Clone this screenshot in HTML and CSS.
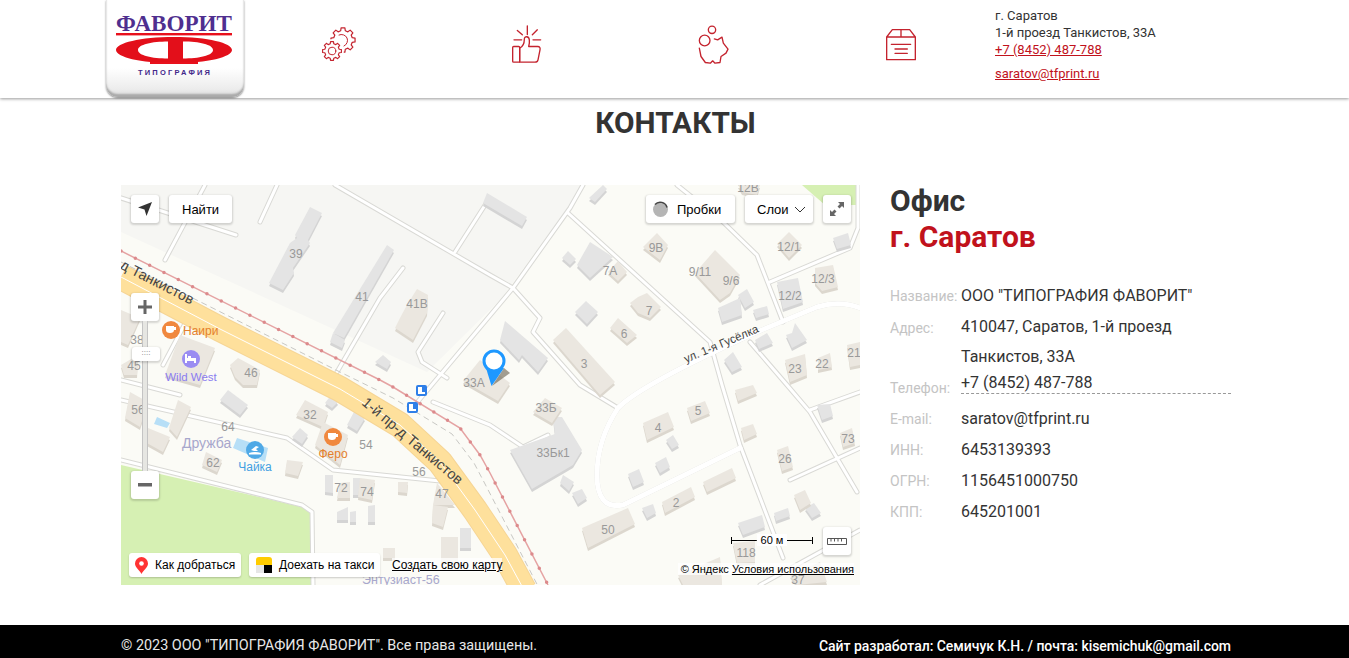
FILE: index.html
```html
<!DOCTYPE html>
<html>
<head>
    <meta charset="utf-8">
    <title>Контакты</title>
    <link rel="stylesheet" href="styles.css">
</head>
<body>
    <header class="site-header">
        <div class="header-inner">
            <a class="logo">
                <svg viewBox="106 0 138 97" width="138" height="97">
                    <text class="logo-name" x="116" y="31" textLength="116" lengthAdjust="spacingAndGlyphs">ФАВОРИТ</text>
                    <rect x="116" y="33" width="116" height="2.4" fill="#e8101c"/>
                    <path fill="#e30f1a" fill-rule="evenodd" d="M116 50c0-7 24-13 58-13s58 6 58 13-24 13-58 13-58-6-58-13zM168 41.500c-16 0-30 3-30 8.500s14 8.500 30 8.500zM183 41.500v17c16 0 30-3 30-8.500s-14-8.500-30-8.500z"/>
                    <rect x="150" y="62" width="48" height="2" fill="#e8101c"/>
                    <text class="logo-sub" x="174" y="75" textLength="72">ТИПОГРАФИЯ</text>
                </svg>
            </a>
            <nav class="header-icons">
                <div class="header-icon">
                    <svg class="ico" width="38" height="38" viewBox="320 25 38 38">
                        <defs>
                            <polygon id="gear" points="7.57,-1.89 9.88,-1.56 9.88,1.56 7.57,1.89 6.69,4.02 8.09,5.88 5.88,8.09 4.02,6.69 1.89,7.57 1.56,9.88 -1.56,9.88 -1.89,7.57 -4.02,6.69 -5.88,8.09 -8.09,5.88 -6.69,4.02 -7.57,1.89 -9.88,1.56 -9.88,-1.56 -7.57,-1.89 -6.69,-4.02 -8.09,-5.88 -5.88,-8.09 -4.02,-6.69 -1.89,-7.57 -1.56,-9.88 1.56,-9.88 1.89,-7.57 4.02,-6.69 5.88,-8.09 8.09,-5.88 6.69,-4.02"/>
                        </defs>
                        <use href="#gear" transform="translate(343 40) scale(1.22)" stroke-width="1"/>
                        <path d="M339 35a6 6 0 1 1 5 11"/>
                        <use href="#gear" class="gear-mask" transform="translate(332 51) scale(.95)"/>
                        <use href="#gear" transform="translate(332 51) scale(.95)" stroke-width="1.200"/>
                        <circle cx="332" cy="51" r="3.800"/>
                    </svg>
                </div>
                <div class="header-icon">
                    <svg class="ico" width="35" height="42" viewBox="90 40 105 125" stroke-width="4">
                        <rect x="101" y="110" width="21" height="47" rx="3"/>
                        <path d="M122 157V115C132 110 136 100 136 88 136 78 150 78 151 90 152 100 150 105 149 110H176C183 110 184 115 183 120L177 150C176 155 172 157 168 157Z"/>
                        <path d="M145 48V74M115 62 130 75M175 60 160 75M105 90H128M162 90H185"/>
                    </svg>
                </div>
                <div class="header-icon">
                    <svg class="ico" width="35" height="42" viewBox="650 40 105 125" stroke-width="4">
                        <circle cx="676" cy="92" r="16"/>
                        <circle cx="698" cy="60" r="11"/>
                        <path d="M705 87 715 90 728 82 732 100 746 118 740 130 725 140 722 158 707 160 700 153 693 160 678 158 665 140 660 115"/>
                    </svg>
                </div>
                <div class="header-icon">
                    <svg class="ico" width="35" height="35" viewBox="1215 50 105 105" stroke-width="4">
                        <path d="M1223 80H1309V148H1223ZM1223 80 1240 58H1292L1309 80M1266 58V80M1237 102H1295M1248 116H1285M1248 129H1285"/>
                    </svg>
                </div>
            </nav>
            <div class="header-contacts">
                <div>г. Саратов</div>
                <div>1-й проезд Танкистов, 33А</div>
                <a href="#">+7 (8452) 487-788</a>
                <a href="#" class="header-mail">saratov@tfprint.ru</a>
            </div>
        </div>
    </header>

    <main class="content">
        <h1 class="page-title">КОНТАКТЫ</h1>
        <div class="contact-row">
            <div class="map">
                <svg class="map-canvas" viewBox="121 185 739 400" width="739" height="400">
                    <defs>
                        <g id="roads">
                            <path d="M205 185 165 260M188 318 163 365M121 198 236 235M277 185 260 222M403 268 380 298 337 372M443 313 418 352 422 362 447 378"/>
                            <path d="M335 185 490 275 513 288 540 318 533 332 580 385 618 408M583 185 570 208 513 288 415 405M568 213 710 342 722 385 740 445 783 558M487 202 455 252"/>
                            <path stroke-width="5" d="M740 448 623 505Q597 510 597 475 597 440 618 408 640 385 757 332L817 307Q840 300 860 308"/>
                            <path d="M677 185 723 222 757 255 783 322M770 282 850 248 858 228V185M750 342 787 385 810 412 857 492M810 410 860 392M790 480 860 448M760 585 860 530"/>
                            <path d="M121 400 287 438 333 470 440 481M121 460 302 505 312 512 313 585M433 402 490 425 523 447 548 435M121 380 180 395"/>
                        </g>
                        <g id="blocks-grey">
                            <polygon points="603,185 589,198 595,202 607,189"/>
                            <polygon points="487,193 527,217 522,226 483,203"/>
                            <polygon points="590,242 613,257 590,278 577,265"/>
                            <polygon points="568,251 576,259 570,265 562,258"/>
                            <polygon points="586,301 598,312 587,324 575,312"/>
                            <polygon points="505,321 548,358 538,372 522,355 519,360 500,340"/>
                            <polygon points="740,298 742,315 722,322 718,308"/>
                            <polygon points="747,289 754,302 745,308 738,295"/>
                            <polygon points="767,306 769,314 756,318 753,310"/>
                            <polygon points="777,282 798,278 803,302 783,309"/>
                            <polygon points="848,233 851,245 837,249 833,238"/>
                            <polygon points="795,323 807,340 792,348 786,335 792,333"/>
                            <polygon points="767,333 773,343 759,349 755,340"/>
                            <polygon points="733,352 742,367 732,372 724,360"/>
                            <polygon points="510,450 555,434 553,417 562,417 582,450 573,465 532,489"/>
                            <polygon points="563,475 574,482 569,491 560,483"/>
                            <polygon points="572,493 582,489 587,498 578,504"/>
                            <polygon points="628,474 639,469 644,482 633,487"/>
                            <polygon points="655,463 666,457 670,467 660,473"/>
                            <polygon points="666,440 673,435 679,445 672,449"/>
                            <polygon points="642,508 653,504 656,513 647,518"/>
                            <polygon points="738,523 762,515 765,527 743,535"/>
                            <polygon points="774,513 788,508 790,516 776,521"/>
                            <polygon points="805,508 814,503 821,513 812,518"/>
                            <polygon points="817,405 830,404 833,416 822,420"/>
                            <polygon points="220,400 228,390 248,405 240,415"/>
                            <polygon points="325,403 332,394 338,402 332,408"/>
                            <polygon points="292,437 300,428 308,435 302,444"/>
                            <polygon points="347,425 355,410 365,418 357,431"/>
                            <polygon points="325,475 333,475 333,493 325,492"/>
                            <polygon points="353,478 360,478 360,495 353,495"/>
                            <polygon points="337,512 348,507 348,520 337,520"/>
                            <polygon points="350,512 356,511 356,522 350,522"/>
                            <polygon points="368,506 375,505 375,522 368,522"/>
                            <polygon points="460,528 471,528 471,548 460,548"/>
                            <polygon points="310,207 322,213 308,240 310,243 293,268 294,273 283,290 269,283 290,243 297,238 295,235"/>
                            <polygon points="387,245 394,250 344,338 333,333"/>
                            <polygon points="333,333 345,340 342,348 330,342"/>
                            <polygon points="375,362 383,355 391,362 387,369"/>
                        </g>
                        <g id="blocks-beige">
                            <polygon points="417,289 428,295 427,313 413,340 395,328 400,318 407,305"/>
                            <polygon points="480,360 510,383 498,401 463,381"/>
                            <polygon points="545,398 562,408 552,423 533,412"/>
                            <polygon points="566,328 615,382 600,395 553,340"/>
                            <polygon points="618,318 637,335 627,343 610,328"/>
                            <polygon points="630,303 638,297 647,293 661,307 650,318 638,313"/>
                            <polygon points="618,261 627,272 618,281 608,272"/>
                            <polygon points="657,233 668,245 660,260 643,247"/>
                            <polygon points="715,250 740,275 730,293 720,300 695,273"/>
                            <polygon points="789,232 802,245 789,258 777,244"/>
                            <polygon points="738,185 760,185 757,195 742,192"/>
                            <polygon points="815,268 833,265 838,287 822,291 815,283"/>
                            <polygon points="785,360 805,354 807,375 790,382"/>
                            <polygon points="818,358 830,353 832,367 818,370"/>
                            <polygon points="847,345 860,342 860,365 850,367"/>
                            <polygon points="643,423 668,412 674,427 647,440"/>
                            <polygon points="687,408 705,401 710,413 691,421"/>
                            <polygon points="735,390 753,385 757,393 738,401"/>
                            <polygon points="741,428 753,424 757,434 744,440"/>
                            <polygon points="777,450 788,446 793,467 782,471"/>
                            <polygon points="840,433 852,428 855,443 843,447"/>
                            <polygon points="794,495 805,490 811,503 800,510"/>
                            <polygon points="662,502 691,487 695,497 665,513"/>
                            <polygon points="703,482 732,468 736,478 707,492"/>
                            <polygon points="582,528 628,508 635,524 588,548"/>
                            <polygon points="733,543 755,541 755,562 737,563"/>
                            <polygon points="678,575 720,557 722,585 683,585"/>
                            <polygon points="790,575 820,562 827,582 797,585"/>
                            <polygon points="130,392 148,402 140,427 125,418"/>
                            <polygon points="178,400 191,407 177,437 169,428"/>
                            <polygon points="148,428 170,437 163,452 145,442"/>
                            <polygon points="206,452 222,460 217,472 202,465"/>
                            <polygon points="305,400 328,412 323,427 296,415"/>
                            <polygon points="323,422 348,435 340,465 315,445"/>
                            <polygon points="287,460 303,462 298,476 285,473"/>
                            <polygon points="437,483 455,505 433,505"/>
                            <polygon points="433,505 448,507 443,527 432,523"/>
                            <polygon points="398,482 408,482 407,493 398,492"/>
                            <polygon points="340,483 350,482 350,498 337,498"/>
                            <polygon points="360,478 375,480 372,500 358,497"/>
                            <polygon points="383,548 395,548 395,558 383,558"/>
                            <polygon points="441,537 458,537 458,562 441,562"/>
                            <polygon points="180,335 215,348 200,385 165,375"/>
                            <polygon points="230,365 238,358 260,370 257,385 243,385 235,377"/>
                            <polygon points="121,310 140,318 128,345 121,342"/>
                            <polygon points="121,365 138,355 137,375 124,375"/>
                        </g>
                    </defs>

                    <rect class="land" x="121" y="185" width="739" height="400"/>
                    <polygon class="zone" points="121,185 585,185 500,300 427,372 270,300 121,232"/>
                    <polygon class="park" points="802,185 860,185 860,205 825,205"/>
                    <polygon class="park" points="121,465 302,507 312,514 313,585 121,585"/>
                    <polygon class="water" points="237,438 268,448 265,462 233,448"/>
                    <polygon class="water" points="157,417 170,423 167,428 154,424"/>

                    <use href="#roads" class="road-case"/>
                    <use href="#roads" class="road-fill"/>

                    <use href="#blocks-grey" class="block-grey-side" y="3"/>
                    <use href="#blocks-grey" class="block-grey"/>
                    <use href="#blocks-beige" class="block-beige-side" y="3"/>
                    <use href="#blocks-beige" class="block-beige"/>

                    <path class="highway-edge" d="M121 277 220 329 340 389 400 425 440 462 475 510 505 555 524 590"/>
                    <path class="highway" d="M121 277 220 329 340 389 400 425 440 462 475 510 505 555 524 590"/>
                    <path class="highway-line" d="M121 277 220 329 340 389 400 425 440 462 475 510 505 555 524 590"/>
                    <path class="rail-dash" d="M121 262 340 372 393 398 452 434 474 463 484 482 540 590"/>
                    <path class="rail" d="M121 251 380 380 393 387 460 428 480 455 490 473 548 585"/>
                    <path class="rail-dots" d="M121 251 380 380 393 387 460 428 480 455 490 473 548 585"/>

                    <g class="num">
                        <text x="296" y="258">39</text>
                        <text x="362" y="301">41</text>
                        <text x="417" y="308">41В</text>
                        <text x="137" y="344">38</text>
                        <text x="134" y="370">45</text>
                        <text x="251" y="377">46</text>
                        <text x="474" y="387">33А</text>
                        <text x="584" y="368">3</text>
                        <text x="624" y="338">6</text>
                        <text x="649" y="315">7</text>
                        <text x="610" y="275">7А</text>
                        <text x="656" y="252">9В</text>
                        <text x="700" y="276">9/11</text>
                        <text x="731" y="285">9/6</text>
                        <text x="789" y="251">12/1</text>
                        <text x="748" y="192">12В</text>
                        <text x="823" y="283">12/3</text>
                        <text x="790" y="300">12/2</text>
                        <text x="795" y="373">23</text>
                        <text x="822" y="368">22</text>
                        <text x="854" y="357">21</text>
                        <text x="138" y="414">56</text>
                        <text x="228" y="431">64</text>
                        <text x="213" y="467">62</text>
                        <text x="310" y="419">32</text>
                        <text x="366" y="449">54</text>
                        <text x="419" y="476">56</text>
                        <text x="341" y="492">72</text>
                        <text x="367" y="496">74</text>
                        <text x="442" y="498">47</text>
                        <text x="546" y="412">33Б</text>
                        <text x="553" y="457">33Бк1</text>
                        <text x="658" y="432">4</text>
                        <text x="698" y="415">5</text>
                        <text x="785" y="463">26</text>
                        <text x="848" y="443">73</text>
                        <text x="676" y="507">2</text>
                        <text x="608" y="534">50</text>
                        <text x="746" y="557">118</text>
                        <text x="798" y="584">37</text>
                    </g>

                    <text class="road-label" transform="translate(119 268) rotate(27)">д Танкистов</text>
                    <text class="road-label" transform="translate(361 404) rotate(40)">1-й пр-д Танкистов</text>
                    <text class="road-label road-label-small" transform="translate(686 363) rotate(-23)">ул. 1-я Гусёлка</text>
                    <text class="place" x="182" y="448">Дружба</text>
                    <text class="place place-small" x="362" y="584">Энтузиаст-56</text>

                    <circle cx="171" cy="330" r="9" fill="#f0883e"/>
                    <path class="poi-glyph" d="M166 326h8v4q0 3-4 3t-4-3zM174 327h2v3h-2z"/>
                    <text class="poi-orange" x="183" y="335">Наири</text>
                    <circle cx="191" cy="359" r="9" fill="#9a8cf2"/>
                    <path class="poi-glyph" d="M185 354h2v4h9v5h-2v-2h-7v2h-2zM188 356h3v2h-3z"/>
                    <text class="poi-purple" x="191" y="381" text-anchor="middle">Wild West</text>
                    <circle cx="255" cy="450" r="9" fill="#4fa9e6"/>
                    <path class="poi-glyph" d="M249 453q6-2 12 0v1.500h-12zM251 450l5-4 3 1-3 2 2 2h-4z"/>
                    <text class="poi-blue" x="255" y="471" text-anchor="middle">Чайка</text>
                    <circle cx="333" cy="437" r="9" fill="#f0883e"/>
                    <path class="poi-glyph" d="M328 433h8v4q0 3-4 3t-4-3zM336 434h2v3h-2z"/>
                    <text class="poi-orange" x="333" y="458" text-anchor="middle">Феро</text>

                    <rect x="416" y="385" width="11" height="11" rx="2" fill="#2f7fe8"/>
                    <path class="poi-glyph" d="M418 387h4v5h3v2h-7z"/>
                    <rect x="407" y="402" width="11" height="11" rx="2" fill="#2f7fe8"/>
                    <path class="poi-glyph" d="M409 404h4v5h3v2h-7z"/>

                    <path class="pin-shadow" d="M492 386 510 373 504 368z"/>
                    <path class="pin-tail" d="M486 368 491.500 386 504 368z"/>
                    <circle class="pin-ring" cx="494" cy="361" r="10"/>
                </svg>

                <div class="map-bar map-bar-tl">
                    <button class="map-btn map-btn-square">
                        <svg width="16" height="16" viewBox="0 0 16 16"><path fill="#333" d="M15 1 1 6.500 7.500 8.500 9.500 15z"/></svg>
                    </button>
                    <button class="map-btn">Найти</button>
                </div>

                <div class="map-bar map-bar-tr">
                    <button class="map-btn map-btn-traffic">
                        <svg width="17" height="17" viewBox="0 0 17 17"><circle cx="8.500" cy="8.500" r="7.500" fill="#b5b5b5"/><path fill="none" stroke="#444" stroke-width="1.500" d="M3 3.500a7 7 0 0 1 12 3"/></svg>
                        Пробки
                    </button>
                    <button class="map-btn map-btn-layers">
                        Слои
                        <svg width="12" height="7" viewBox="0 0 12 7"><path fill="none" stroke="#333" d="M1 1l5 5 5-5"/></svg>
                    </button>
                    <button class="map-btn map-btn-square">
                        <svg width="16" height="16" viewBox="0 0 16 16"><path fill="#666" d="M9 1h6v6l-2-2-2.500 2.500-2-2L11 3zM7 15H1V9l2 2 2.500-2.500 2 2L5 13z"/></svg>
                    </button>
                </div>

                <div class="zoom-ctl">
                    <button class="map-btn map-btn-square zoom-btn">
                        <svg width="14" height="14" viewBox="0 0 14 14"><path fill="#666" d="M5.500 0h3v5.500H14v3H8.500V14h-3V8.500H0v-3h5.500z"/></svg>
                    </button>
                    <div class="zoom-track">
                        <div class="zoom-handle">::::</div>
                    </div>
                    <button class="map-btn map-btn-square zoom-btn">
                        <svg width="14" height="4" viewBox="0 0 14 4"><rect width="14" height="3.500" fill="#666"/></svg>
                    </button>
                </div>

                <div class="map-bar map-bar-bl">
                    <button class="map-chip">
                        <svg width="13" height="17" viewBox="0 0 13 17"><path fill="#f33" d="M6.500 0a6.500 6.500 0 0 1 6.500 6.500C13 10.500 8.500 13 6.500 17 4.500 13 0 10.500 0 6.500A6.500 6.500 0 0 1 6.500 0z"/><circle cx="6.500" cy="6.500" r="2.300" fill="#fff"/></svg>
                        Как добраться
                    </button>
                    <button class="map-chip map-chip-taxi">
                        <svg width="16" height="16" viewBox="0 0 16 16"><rect width="16" height="16" rx="3" fill="#fc0"/><rect y="8" width="8" height="8" fill="#e6e6e6"/><rect x="8" y="8" width="8" height="8" fill="#000"/></svg>
                        Доехать на такси
                    </button>
                    <a href="#" class="map-link">Создать свою карту</a>
                </div>

                <div class="map-scale">
                    <span class="scale-line"></span>
                    <span class="scale-text">60 м</span>
                    <span class="scale-line scale-line-end"></span>
                </div>
                <button class="map-btn map-btn-square map-ruler">
                    <svg width="20" height="8" viewBox="0 0 20 8"><path fill="none" stroke="#555" d="M.5 1.500h19v6H.5zM4 1.500v3M7.500 1.500v3M11 1.500v3M14.500 1.500v3"/></svg>
                </button>
                <div class="map-copy">© Яндекс <a href="#">Условия использования</a></div>
            </div>

            <section class="office">
                <h2 class="office-title">Офис<br><span>г. Саратов</span></h2>
                <div class="info-row info-row-name">
                    <div class="info-label">Название:</div>
                    <div class="info-value">ООО "ТИПОГРАФИЯ ФАВОРИТ"</div>
                </div>
                <div class="info-row info-row-address">
                    <div class="info-label">Адрес:</div>
                    <div class="info-value">410047, Саратов, 1-й проезд Танкистов, 33А</div>
                </div>
                <div class="info-row">
                    <div class="info-label">Телефон:</div>
                    <div class="info-value info-phone">+7 (8452) 487-788</div>
                </div>
                <div class="info-row">
                    <div class="info-label">E-mail:</div>
                    <div class="info-value">saratov@tfprint.ru</div>
                </div>
                <div class="info-row">
                    <div class="info-label">ИНН:</div>
                    <div class="info-value">6453139393</div>
                </div>
                <div class="info-row">
                    <div class="info-label">ОГРН:</div>
                    <div class="info-value">1156451000750</div>
                </div>
                <div class="info-row">
                    <div class="info-label">КПП:</div>
                    <div class="info-value">645201001</div>
                </div>
            </section>
        </div>
    </main>

    <footer class="site-footer">
        <div class="footer-inner">
            <span>© 2023 ООО "ТИПОГРАФИЯ ФАВОРИТ". Все права защищены.</span>
            <span class="footer-dev">Сайт разработал: Семичук К.Н. / почта: kisemichuk@gmail.com</span>
        </div>
    </footer>
</body>
</html>
```

FILE: styles.css
```css
body {
    font-family: Roboto, "Liberation Sans", sans-serif;
    background-color: #fff;
    color: #333;
    margin: 0;
    padding: 0;
}
a {
    color: inherit;
}

/* header */
.site-header {
    height: 98px;
    background: #fff;
    box-shadow: 0 1px 3px rgba(0,0,0,0.4);
    position: relative;
}
.header-inner {
    margin-left: 106px;
    display: flex;
}
.logo {
    display: block;
    width: 138px;
    height: 97px;
    flex: none;
    border-radius: 0 0 12px 12px;
    background: linear-gradient(180deg, #fff 70%, #ececec 92%, #d9d9d9 100%);
    box-shadow: 0 1px 2px rgba(0,0,0,0.5), inset 0 -3px 2px #a9a9a9;
}
.logo-name {
    font-family: "Liberation Serif", serif;
    font-weight: bold;
    font-size: 24px;
    fill: #4f2f8f;
}
.logo-sub {
    font-family: "Liberation Sans", sans-serif;
    font-weight: bold;
    font-size: 7.5px;
    fill: #43288a;
    text-anchor: middle;
}
.header-icons {
    display: flex;
    width: 749.5px;
    margin-left: 1.5px;
}
.header-icon {
    flex: 1;
    height: 88px;
    display: flex;
    align-items: center;
    justify-content: center;
}
.ico {
    fill: none;
    stroke: #c4232e;
    stroke-linejoin: round;
    stroke-linecap: round;
}
.gear-mask {
    fill: #fff;
    stroke: #fff;
    stroke-width: 5;
}
.header-contacts {
    padding-top: 7px;
    font-size: 13px;
    line-height: 17px;
    color: #333;
}
.header-contacts a {
    display: block;
    color: #c1121c;
}
.header-contacts .header-mail {
    margin-top: 7px;
}

/* main */
.content {
    width: 1110px;
    margin-left: 121px;
}
.page-title {
    margin: 7px 0 42px;
    padding-right: 1px;
    text-align: center;
    font-size: 29.8px;
    line-height: 36px;
    font-weight: 700;
    color: #333;
}
.contact-row {
    display: flex;
    gap: 30px;
}

/* map */
.map {
    width: 739px;
    height: 400px;
    margin-top: 2px;
    position: relative;
    overflow: hidden;
    flex: none;
    font-family: "Liberation Sans", Arial, sans-serif;
}
.map-canvas {
    display: block;
}
.land { fill: #fbfbf6; }
.zone { fill: #f6f6f3; }
.park { fill: #d6f0b3; }
.water { fill: #b7dff7; }
.road-case {
    fill: none;
    stroke: #d9d9d5;
    stroke-width: 5;
    stroke-linejoin: round;
    stroke-linecap: round;
}
.road-fill {
    fill: none;
    stroke: #fff;
    stroke-width: 3;
    stroke-linejoin: round;
    stroke-linecap: round;
}
.block-grey { fill: #e4e4e4; }
.block-grey-side { fill: #d4d4d4; }
.block-beige { fill: #ebe7e0; }
.block-beige-side { fill: #dcd7ce; }
.highway-edge {
    fill: none;
    stroke: #f6d595;
    stroke-width: 26;
    stroke-linejoin: round;
}
.highway {
    fill: none;
    stroke: #fee09c;
    stroke-width: 24;
    stroke-linejoin: round;
}
.highway-line {
    fill: none;
    stroke: #fff;
    stroke-width: 1;
    stroke-linejoin: round;
}
.rail {
    fill: none;
    stroke: #e5a3a3;
    stroke-width: 1.500;
}
.rail-dots {
    fill: none;
    stroke: #dc8a8c;
    stroke-width: 3.500;
    stroke-linecap: round;
    stroke-dasharray: 0 16;
}
.rail-dash {
    fill: none;
    stroke: #c8c8c4;
    stroke-width: 1;
    stroke-dasharray: 6 4;
}
.num text {
    font-size: 12px;
    fill: #999;
    text-anchor: middle;
}
.road-label {
    font-size: 14.5px;
    fill: #444;
}
.road-label-small {
    font-size: 11.5px;
}
.place {
    font-size: 14px;
    fill: #a7a7cc;
}
.place-small {
    font-size: 12.500px;
}
.poi-orange, .poi-purple, .poi-blue {
    font-size: 12px;
}
.poi-purple {
    font-size: 11.5px;
}
.poi-orange { fill: #e5802c; }
.poi-purple { fill: #8a7cf0; }
.poi-blue { fill: #44a0e2; }
.poi-glyph { fill: #fff; }
.pin-tail { fill: #1e98ff; }
.pin-shadow { fill: rgba(90,80,60,0.55); }
.pin-ring {
    fill: #fff;
    stroke: #1e98ff;
    stroke-width: 3;
}

/* map controls */
.map-bar {
    position: absolute;
    display: flex;
    gap: 10px;
    align-items: center;
}
.map-bar-tl { left: 10px; top: 10px; }
.map-bar-tr { right: 9px; top: 10px; }
.map-bar-bl { left: 8px; bottom: 8px; gap: 8px; }
.map-btn {
    height: 28px;
    padding: 0 13px;
    display: flex;
    align-items: center;
    justify-content: center;
    border: none;
    border-radius: 3px;
    background: #fff;
    box-shadow: 0 1px 2px 1px rgba(0,0,0,0.15);
    font-family: inherit;
    font-size: 13px;
    color: #000;
}
.map-btn-square {
    width: 28px;
    padding: 0;
}
.map-btn-traffic {
    gap: 8px;
    padding: 0 0 0 6px;
    width: 89px;
    justify-content: flex-start;
}
.map-btn-layers {
    gap: 5px;
    width: 68px;
    padding: 0 7px 0 12px;
    justify-content: flex-start;
}
.zoom-ctl {
    position: absolute;
    left: 10px;
    top: 108px;
    width: 28px;
    display: flex;
    flex-direction: column;
    align-items: center;
}
.zoom-track {
    width: 6px;
    height: 150px;
    background: #e6e6e2;
    border-left: 1px solid #c4c4c4;
    border-right: 1px solid #c4c4c4;
    box-sizing: border-box;
    position: relative;
}
.zoom-handle {
    position: absolute;
    left: -11px;
    top: 26px;
    width: 28px;
    height: 14px;
    border-radius: 3px;
    background: #fff;
    box-shadow: 0 1px 2px 1px rgba(0,0,0,0.15);
    font-size: 8px;
    line-height: 12px;
    text-align: center;
    color: #777;
}
.map-chip {
    height: 24px;
    width: 112px;
    padding: 0 0 0 6px;
    display: flex;
    align-items: center;
    gap: 7px;
    border: none;
    border-radius: 3px;
    background: #fff;
    box-shadow: 0 1px 2px rgba(0,0,0,0.2);
    font-family: inherit;
    font-size: 12px;
    color: #000;
}
.map-chip-taxi {
    width: 131px;
    padding-left: 7px;
}
.map-link {
    font-size: 12px;
    color: #000;
    margin-left: 4px;
    background: rgba(255,255,255,0.75);
}
.map-scale {
    position: absolute;
    left: 610px;
    top: 349px;
    display: flex;
    align-items: center;
    width: 82px;
    font-size: 11px;
    color: #000;
}
.scale-line {
    flex: 1;
    height: 7px;
    border-left: 1px solid #000;
    background: linear-gradient(#000, #000) center / 100% 1px no-repeat;
}
.scale-line-end {
    border-left: none;
    border-right: 1px solid #000;
}
.scale-text {
    padding: 0 4px;
    background: #fff;
}
.map-ruler {
    position: absolute;
    right: 9px;
    top: 342px;
}
.map-copy {
    position: absolute;
    right: 6px;
    bottom: 10px;
    font-size: 11px;
    color: #000;
    padding-left: 3px;
    background: rgba(255,255,255,0.75);
}

/* office */
.office {
    flex: 1;
}
.office-title {
    margin: 0 0 25px;
    font-size: 30px;
    line-height: 36px;
    font-weight: 700;
    color: #333;
}
.office-title span {
    color: #c1121c;
}
.info-row {
    display: flex;
}
.info-row-name {
    height: 32px;
}
.info-label {
    width: 71px;
    height: 31px;
    box-sizing: border-box;
    flex: none;
    font-size: 14px;
    line-height: 31px;
    padding-top: 1px;
    color: #c4c4c4;
}
.info-value {
    flex: 1;
    font-size: 16px;
    line-height: 31px;
    color: #333;
}
.info-row-address .info-value {
    line-height: 30px;
}
.info-phone {
    height: 21px;
    line-height: 22px;
    border-bottom: 1px dashed #999;
}

/* footer */
.site-footer {
    margin-top: 40px;
    height: 33px;
    background: #000;
    color: #fff;
}
.footer-inner {
    width: 1110px;
    margin-left: 121px;
    padding-top: 11px;
    display: flex;
    justify-content: space-between;
    font-size: 14px;
    line-height: 20px;
}
.footer-inner span:first-child {
    color: #e8e8e8;
    font-size: 14.4px;
}
.footer-dev {
    font-weight: 500;
    letter-spacing: -0.03px;
}
```
